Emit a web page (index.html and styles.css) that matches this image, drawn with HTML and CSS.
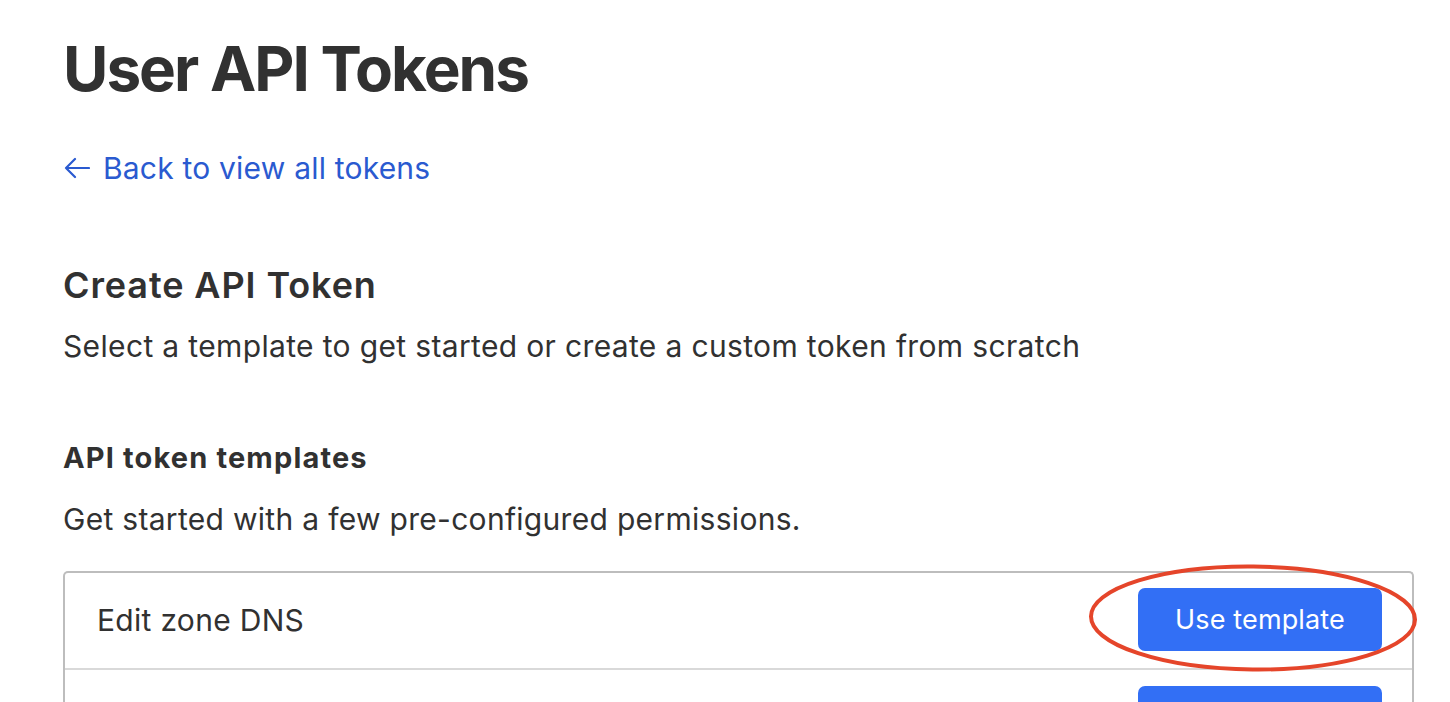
FILE: index.html
```html
<!DOCTYPE html>
<html lang="en">
<head>
<meta charset="utf-8">
<title>User API Tokens</title>
<link rel="stylesheet" href="styles.css">
</head>
<body>
<main class="page">
  <h1 class="title">User API Tokens</h1>
  <a class="back" href="#">
    <svg class="back-icon" width="26" height="22" viewBox="0 0 26 22" aria-hidden="true">
      <path d="M25 11H2M11 2L2 11l9 9" fill="none" stroke="currentColor" stroke-width="2.2" stroke-linecap="round" stroke-linejoin="round"/>
    </svg>
    <span>Back to view all tokens</span>
  </a>
  <section class="create">
    <h2 class="create-title">Create API Token</h2>
    <p class="lead">Select a template to get started or create a custom token from scratch</p>
  </section>
  <section class="templates">
    <h3 class="templates-title">API token templates</h3>
    <p class="lead-alt">Get started with a few pre-configured permissions.</p>
    <div class="table">
      <div class="row">
        <span class="row-name">Edit zone DNS</span>
        <button class="btn">Use template</button>
        <svg class="annot" width="340" height="116" viewBox="0 0 340 116" aria-hidden="true">
          <ellipse cx="170" cy="58" rx="162" ry="51.5" fill="none" stroke="#e5452a" stroke-width="4" transform="rotate(0.6 170 58)"/>
        </svg>
      </div>
      <div class="row">
        <span class="row-name"></span>
        <button class="btn">Use template</button>
      </div>
    </div>
  </section>
</main>
</body>
</html>
```
FILE: styles.css
```css
html, body {
  margin: 0;
  padding: 0;
  background: #ffffff;
  overflow: hidden;
}
body {
  font-family: Inter, "Helvetica Neue", "Liberation Sans", Arial, sans-serif;
  color: #313131;
}
.page {
  padding: 30px 36px 0 63px;
}
.title {
  margin: 0;
  font-size: 62px;
  font-weight: 700;
  line-height: 78px;
  letter-spacing: -2px;
}
.back {
  display: inline-flex;
  align-items: center;
  gap: 13px;
  margin-top: 42px;
  color: #2a5ad0;
  text-decoration: none;
  font-size: 30px;
  line-height: 36px;
  letter-spacing: 0.2px;
}
.back-icon {
  display: block;
  margin-left: 1px;
}
.create {
  margin-top: 78px;
}
.create-title {
  margin: 0;
  font-size: 36px;
  font-weight: 600;
  line-height: 42px;
  letter-spacing: 0.9px;
}
.lead {
  margin: 22px 0 0;
  font-size: 30px;
  line-height: 36px;
  letter-spacing: 0.35px;
}
.templates {
  margin-top: 78px;
}
.templates-title {
  margin: 0;
  font-size: 29px;
  font-weight: 700;
  line-height: 32px;
  letter-spacing: 1.15px;
}
.lead-alt {
  margin: 27px 0 0;
  font-size: 30px;
  line-height: 36px;
  letter-spacing: 0.3px;
}
.table {
  margin-top: 34px;
  border: 2px solid #bdbdbd;
  border-bottom: none;
  border-radius: 5px 5px 0 0;
}
.row {
  position: relative;
  display: flex;
  align-items: center;
  justify-content: space-between;
  padding: 15px 30px 17px 32px;
  border-bottom: 2px solid #d9d9d9;
}
.row + .row {
  padding-top: 16px;
}
.row-name {
  font-size: 30px;
  line-height: 36px;
  letter-spacing: 0.3px;
}
.btn {
  width: 244px;
  height: 63px;
  border: none;
  border-radius: 7px;
  background: #326ff5;
  color: #ffffff;
  font-family: inherit;
  font-size: 27px;
  font-weight: 400;
  letter-spacing: 0.15px;
}
.annot {
  position: absolute;
  right: -11px;
  top: -13px;
  pointer-events: none;
}
```
